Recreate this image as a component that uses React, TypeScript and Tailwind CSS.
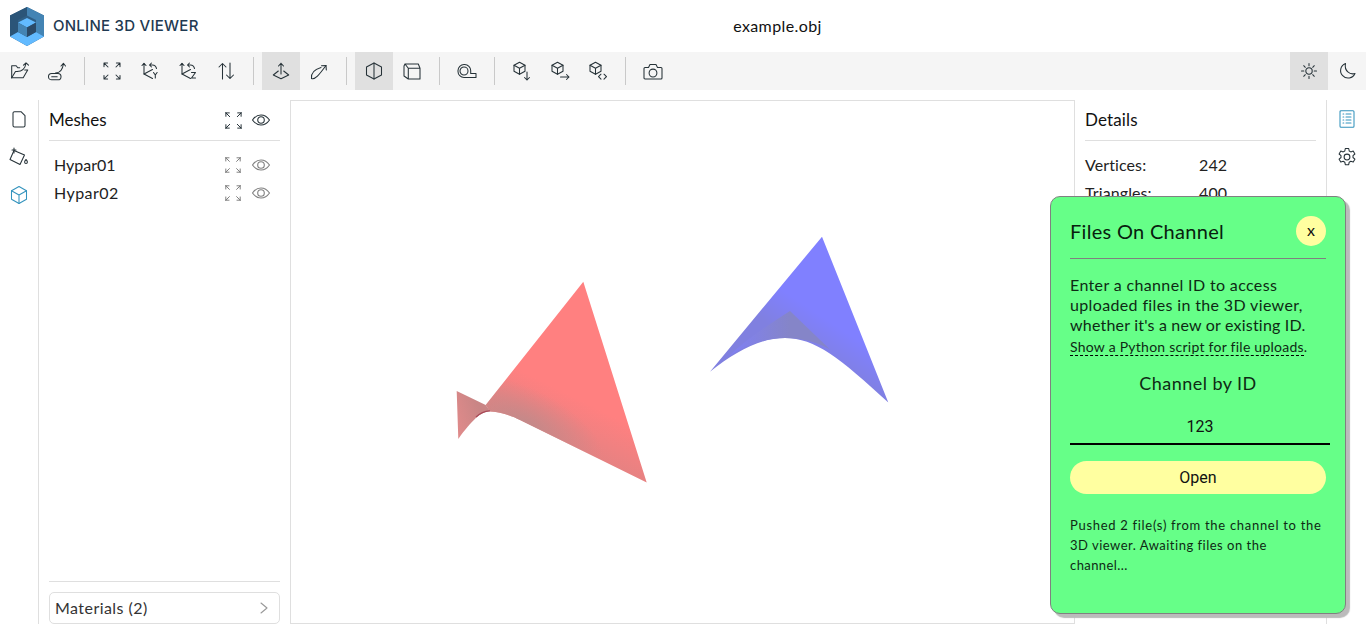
import React from "react";

const S = ({ size = 20, color = "#263238", w = 1.05, children }: { size?: number; color?: string; w?: number; children: React.ReactNode }) => (
  <svg width={size} height={size} viewBox="0 0 20 20" fill="none" stroke={color} strokeWidth={w} strokeLinecap="round" strokeLinejoin="round">
    {children}
  </svg>
);

const FitPaths = () => (
  <>
    <path d="M2 2h3.600M2 2v3.600M2 2l4 4" />
    <path d="M18 2h-3.600M18 2v3.600M18 2l-4 4" />
    <path d="M2 18h3.600M2 18v-3.600M2 18l4-4" />
    <path d="M18 18h-3.600M18 18v-3.600M18 18l-4-4" />
  </>
);

const EyePaths = () => (
  <>
    <path d="M1.500 10C4 6.400 7 5 10 5s6 1.400 8.500 5c-2.500 3.600-5.500 5-8.500 5s-6-1.400-8.500-5z" />
    <circle cx="10" cy="10" r="3.300" />
  </>
);

const icons: Record<string, React.ReactNode> = {
  open: (
    <>
      <path d="M2.700 16.700V4.700h4.500l1.500 2h2" />
      <path d="M2.700 16.700L6.500 10.500h2" />
      <path d="M2.700 16.700h11.500l4.500-7.700h-3" />
      <path d="M8 10.500c4 0 8-1.500 9-8.500M14.500 4.200L17 1.800l2.500 2.400" />
    </>
  ),
  link: (
    <>
      <rect x="1.500" y="12.500" width="12.500" height="6.300" rx="3.100" />
      <path d="M4.700 15.700h5.500" />
      <path d="M8.500 12c4 0 7-2 8-9.500M14 5l2.400-2.700L18.500 5" />
    </>
  ),
  fit: <FitPaths />,
  rotY: (
    <>
      <path d="M4 2.500V13l8.500 4.500" />
      <path d="M2 4.500l2-2.200 2 2.200" />
      <path d="M4 13l8.500-4.500" />
      <path d="M9.500 4h3c2 0 3.500 1.500 4 3.500M11.500 2l-2 2 2 2" />
      <path d="M13.500 11.500l1.800 2.500 1.800-2.500M15.300 14v3" />
    </>
  ),
  rotZ: (
    <>
      <path d="M4 2.500V13l8.500 4.500" />
      <path d="M2 4.500l2-2.200 2 2.200" />
      <path d="M4 13l8.500-4.500" />
      <path d="M9.500 4h3c2 0 3.500 1.500 4 3.500M11.500 2l-2 2 2 2" />
      <path d="M13.500 11.500h4l-4 5.500h4" />
    </>
  ),
  flip: (
    <>
      <path d="M6.500 18V2.500M3 6l3.500-3.500L10 6" />
      <path d="M14 2v15.500M10.500 14l3.500 3.500 3.500-3.500" />
    </>
  ),
  axis: (
    <>
      <path d="M10 13V2.300M7.500 5L10 2.300 12.500 5" />
      <path d="M7.300 10L2.300 14l7.700 3.700 7.700-3.700-5-4" />
    </>
  ),
  curve: (
    <>
      <path d="M2.500 17.500C2 13 5 8.500 12 6.500M2.500 17.500C6 19 10 14 17 4.500" />
      <path d="M12.500 4.700L17 4.500l.3 4.500" />
    </>
  ),
  persp: (
    <>
      <path d="M10 2l7.500 4v8L10 18l-7.500-4V6z" />
      <path d="M10 2v16" />
    </>
  ),
  ortho: <path d="M6.300 7.300H18V18H6.300zM6.300 7.300L3 3H16.300L18 7.300M3 3L2 5v10l4.300 3" />,
  measure: (
    <>
      <path d="M7 16.500h12v-4h-5.300V9.500A6 6 0 0 0 7.700 3.500H7A6 6 0 0 0 1 9.500v1A6 6 0 0 0 7 16.500z" />
      <circle cx="7" cy="10" r="4" />
    </>
  ),
  snapshot: (
    <>
      <path d="M2 6.500h3.500L7 3.500h6l1.500 3H18a1 1 0 0 1 1 1V17a1 1 0 0 1-1 1H2a1 1 0 0 1-1-1V7.500a1 1 0 0 1 1-1z" />
      <circle cx="10" cy="12" r="3.900" />
    </>
  ),
  sun: (
    <>
      <circle cx="10" cy="10" r="3.200" />
      <path d="M10 2.500v2.300M10 15.200v2.300M2.500 10h2.300M15.200 10h2.300M4.700 4.700l1.600 1.600M13.700 13.700l1.600 1.600M4.700 15.300l1.600-1.600M13.700 6.300l1.600-1.600" />
    </>
  ),
  moon: <path d="M8.500 2.500a7.500 7.500 0 1 0 9.500 10c-5 1.500-11-2.500-9.500-10z" />,
  file: <path d="M4 4.200A1.500 1.500 0 0 1 5.500 2.700H12L16 6.700V16.500A1.500 1.500 0 0 1 14.500 18H5.500A1.500 1.500 0 0 1 4 16.500z" />,
  material: (
    <>
      <path d="M5 3.500L15.500 8 11 17.500 1 12.500z" />
      <path d="M5 1v5M3 3h4" />
      <path d="M17 12.500c.8 1 1.400 1.700 1.400 2.500a1.400 1.400 0 0 1-2.800 0c0-.8.600-1.500 1.400-2.500z" />
    </>
  ),
  cube: (
    <>
      <path d="M10 1.500l7.500 4.300v8.400L10 18.500l-7.500-4.300V5.800z" />
      <path d="M2.500 5.800L10 10l7.500-4.200M10 10v8.500" />
    </>
  ),
  details: (
    <>
      <rect x="3" y="1.700" width="14" height="16.500" rx="1" />
      <path d="M6 5h.8M9 5h5M6 8h.8M9 8h5M6 11h.8M9 11h5M6 14h.8M9 14h5" />
    </>
  ),
  settings: (
    <>
      <path d="M8.300 1.500h3.400l.5 2.500 1.600.9 2.400-.8 1.700 2.900-1.900 1.700v1.800l1.900 1.700-1.700 2.900-2.400-.8-1.600.9-.5 2.500H8.300l-.5-2.500-1.600-.9-2.400.8-1.700-2.900 1.900-1.700V8.700L2.100 7l1.700-2.900 2.400.8 1.600-.9z" />
      <circle cx="10" cy="10" r="2.900" />
    </>
  ),
};

const CubeMini = () => (
  <>
    <path d="M7.500 1.300l5.500 3v6l-5.500 3-5.500-3v-6z" />
    <path d="M2 4.300l5.500 3 5.500-3M7.500 7.300v6" />
  </>
);
const exportIcons: Record<string, React.ReactNode> = {
  down: <path d="M15 11v8M12.500 16.500L15 19l2.500-2.500" />,
  right: <path d="M10.500 16h8.500M16.500 13.500L19 16l-2.500 2.500" />,
  code: <path d="M13 13.200l-2.500 2.500 2.500 2.500M16 13.200l2.500 2.500-2.500 2.500" />,
};

const Btn = ({ name, active, ex }: { name?: string; active?: boolean; ex?: string }) => (
  <div className={`w-[38px] h-[38px] flex items-center justify-center shrink-0 ${active ? "bg-[#e0e0e0]" : ""}`}>
    <S>{ex ? <><CubeMini />{exportIcons[ex]}</> : icons[name as string]}</S>
  </div>
);

const Sep = () => (
  <div className="w-[17px] h-[38px] flex items-center justify-center shrink-0">
    <div className="w-px h-[28px] bg-[#c9c9c9]" />
  </div>
);

const Logo = () => (
  <svg width="34" height="39" viewBox="0 0 34 39" className="shrink-0">
    <path d="M17 0L34 8.500V29.500L17 39 0 29.500V8.500z" fill="#2f5f86" />
    <path d="M17 0L34 8.500V29.500L26 25V13L17 8.500z" fill="#4484b4" />
    <path d="M0 8.500L17 0v8.500L8 13v12L0 29.500z" fill="#2b5578" />
    <path d="M0 29.500L8 25l9 5 9-5 8 4.500L17 39z" fill="#62baff" />
    <path d="M17 11L26 15.500 17 20.500 8 15.500z" fill="#62baff" />
    <path d="M8 15.500L17 20.500V30L8 25z" fill="#4484b4" />
    <path d="M26 15.500L17 20.500V30L26 25z" fill="#2b4a68" />
  </svg>
);

const Mesh = () => (
  <svg viewBox="291 101 783 522" className="block w-full h-full">
    <defs>
      <linearGradient id="redG" gradientUnits="userSpaceOnUse" x1="565" y1="455" x2="590" y2="405">
        <stop offset="0" stopColor="#e08282" />
        <stop offset="1" stopColor="#ff8080" />
      </linearGradient>
      <radialGradient id="redR" gradientUnits="userSpaceOnUse" cx="525" cy="424" r="85" gradientTransform="translate(525 424) rotate(26) scale(1 0.42) translate(-525 -424)">
        <stop offset="0" stopColor="#c08a8a" stopOpacity="0.95" />
        <stop offset="1" stopColor="#c08a8a" stopOpacity="0" />
      </radialGradient>
      <linearGradient id="redW" gradientUnits="userSpaceOnUse" x1="480" y1="412" x2="456" y2="420">
        <stop offset="0" stopColor="#c98585" />
        <stop offset="1" stopColor="#de8a8a" />
      </linearGradient>
      <linearGradient id="blueD" gradientUnits="userSpaceOnUse" x1="790" y1="335" x2="735" y2="335">
        <stop offset="0" stopColor="#8585c8" />
        <stop offset="1" stopColor="#8080f0" />
      </linearGradient>
      <linearGradient id="blueE" gradientUnits="userSpaceOnUse" x1="860" y1="385" x2="880" y2="355">
        <stop offset="0" stopColor="#8080e0" />
        <stop offset="1" stopColor="#8080ff" />
      </linearGradient>
    </defs>
    <path d="M583.300 281.700L646.700 482.500 520 420C512 416 503 412.500 490 411.500L485.700 405z" fill="url(#redG)" />
    <path d="M583.300 281.700L646.700 482.500 520 420C512 416 503 412.500 490 411.500L485.700 405z" fill="url(#redR)" />
    <path d="M456.700 391L485.700 405 490 411C481 411.500 472 420 458.300 439z" fill="url(#redW)" />
    <path d="M490 410.800C484 411 480 413 476 417" stroke="#a84a58" strokeWidth="1.200" fill="none" />
    <path d="M822 236.700L888.300 402.500C840 358 815 338 785 338 760 338 735 352 710 371.700z" fill="url(#blueE)" />
    <path d="M790 311L830 349.500C815 341 800 338 785 338 765 338 745 345 728 357 745 340 765 327 790 311z" fill="url(#blueD)" />
  </svg>
);

const body = "font-['Lato','Noto_Sans',sans-serif]";

export default function App() {
  return (
    <div className={`h-screen w-full flex flex-col bg-white text-[#1a1a1a] overflow-hidden relative ${body}`}>
      <header className="h-[52px] flex items-center shrink-0">
        <div className="w-[189px] shrink-0 flex items-center pl-[10px] gap-[9px] overflow-visible whitespace-nowrap">
          <Logo />
          <span className="font-['Inter',sans-serif] font-medium text-[15px] text-[#1f3a52] tracking-[0.25px]">ONLINE 3D VIEWER</span>
        </div>
        <div className="flex-1 text-center text-[16px] tracking-[0.4px] text-[#111]">example.obj</div>
      </header>

      <div className="h-[38px] flex bg-[#f5f5f5] shrink-0">
        <Btn name="open" />
        <Btn name="link" />
        <Sep />
        <Btn name="fit" />
        <Btn name="rotY" />
        <Btn name="rotZ" />
        <Btn name="flip" />
        <Sep />
        <Btn name="axis" active />
        <Btn name="curve" />
        <Sep />
        <Btn name="persp" active />
        <Btn name="ortho" />
        <Sep />
        <Btn name="measure" />
        <Sep />
        <Btn ex="down" />
        <Btn ex="right" />
        <Btn ex="code" />
        <Sep />
        <Btn name="snapshot" />
        <div className="ml-auto flex">
          <Btn name="sun" active />
          <Btn name="moon" />
        </div>
      </div>

      <main className="flex-1 min-h-0 flex mt-[10px] mb-[10px]">
        <nav className="w-[39px] shrink-0 border-r border-[#dfdfdf] flex flex-col items-center">
          <div className="h-[38px] flex items-center justify-center"><S>{icons.file}</S></div>
          <div className="h-[38px] flex items-center justify-center"><S>{icons.material}</S></div>
          <div className="h-[38px] flex items-center justify-center"><S color="#3393bd">{icons.cube}</S></div>
        </nav>

        <aside className="w-[251px] shrink-0 px-[10px] flex flex-col">
          <div className="h-[41px] shrink-0 flex items-center border-b border-[#dfdfdf]">
            <span className="flex-1 text-[17px] tracking-[0px] text-[#111]">Meshes</span>
            <div className="w-[28px] flex justify-center"><S size={19}><FitPaths /></S></div>
            <div className="w-[28px] flex justify-center mr-[5px]"><S size={20}><EyePaths /></S></div>
          </div>
          <div className="flex-1 pt-[10px]">
            {[
              { n: "Hypar01", t: "tracking-[0px]" },
              { n: "Hypar02", t: "tracking-[0.45px]" },
            ].map(({ n, t }) => (
              <div key={n} className="h-[28px] flex items-center pl-[5px]">
                <span className={`flex-1 text-[16px] text-[#222] ${t}`}>{n}</span>
                <div className="w-[28px] flex justify-center"><S size={18} color="#808080" w={1.1}><FitPaths /></S></div>
                <div className="w-[28px] flex justify-center mr-[5px]"><S size={20} color="#808080" w={1.1}><EyePaths /></S></div>
              </div>
            ))}
          </div>
          <div className="border-t border-[#dfdfdf] pt-[10px] shrink-0">
            <div className="h-[32px] border border-[#dfdfdf] rounded-[5px] flex items-center pl-[5px] pr-[9px]">
              <span className="flex-1 text-[16px] tracking-[0.45px] text-[#333]">Materials (2)</span>
              <svg width="12" height="14" viewBox="0 0 12 14" fill="none" stroke="#999" strokeWidth="1.100" strokeLinecap="round" strokeLinejoin="round"><path d="M3 2l6 5-6 5" /></svg>
            </div>
          </div>
        </aside>

        <section className="w-[785px] shrink-0 border border-[#dfdfdf]">
          <Mesh />
        </section>

        <aside className="w-[251px] shrink-0 px-[10px] flex flex-col">
          <div className="h-[41px] shrink-0 flex items-center border-b border-[#dfdfdf]">
            <span className="text-[17px] tracking-[0.15px] text-[#111]">Details</span>
          </div>
          <div className="pt-[10px]">
            <div className="h-[28px] flex items-center text-[16px] tracking-[0.1px] text-[#222]">
              <span className="w-[114px]">Vertices:</span><span>242</span>
            </div>
            <div className="h-[28px] flex items-center text-[16px] tracking-[0.1px] text-[#222]">
              <span className="w-[114px]">Triangles:</span><span>400</span>
            </div>
          </div>
        </aside>

        <nav className="flex-1 border-l border-[#dfdfdf] flex flex-col items-center">
          <div className="h-[38px] flex items-center justify-center"><S color="#3393bd">{icons.details}</S></div>
          <div className="h-[38px] flex items-center justify-center"><S>{icons.settings}</S></div>
        </nav>
      </main>

      <div className="absolute left-[1050px] top-[196px] w-[296px] h-[418px] bg-[#66ff88] border border-[#808080] rounded-[10px] shadow-[4px_4px_1px_#bbbbbb] px-[19px] text-[#0e2a14]">
        <div className="h-[62px] pt-[7px] flex items-center justify-between border-b border-[#808080] w-[256px]">
          <span className="text-[20px] tracking-[0.3px] text-[#08200e]">Files On Channel</span>
          <span className="w-[30px] h-[30px] rounded-full bg-[#ffffa0] flex items-center justify-center text-[16px] text-[#111] pb-[2px]">x</span>
        </div>
        <p className="mt-[16px] text-[16px] leading-[20px] tracking-[0.36px] whitespace-nowrap">
          Enter a channel ID to access<br />uploaded files in the 3D viewer,<br /><span className="tracking-[0.2px]">whether it's a new or existing ID.</span>
        </p>
        <p className="mt-[2px] text-[14px] leading-[20px] tracking-[0.25px] whitespace-nowrap">
          <span className="border-b border-dashed border-black">Show a Python script for file uploads</span>.
        </p>
        <div className="mt-[14px] text-center w-[256px] text-[18px] leading-[24px] tracking-[0.45px]">Channel by ID</div>
        <div className="mt-[21px] w-[260px] h-[29px] border-b-2 border-black text-center text-[16px] font-['Roboto',sans-serif] text-[#111] leading-[21px]">123</div>
        <div className="mt-[16px] w-[256px] h-[33px] rounded-full bg-[#ffffa0] flex items-center justify-center text-[16px] font-['Roboto',sans-serif] text-[#111]">Open</div>
        <p className="mt-[21px] text-[13px] leading-[20px] whitespace-nowrap">
          <span className="tracking-[0.7px]">Pushed 2 file(s) from the channel to the</span><br />
          <span className="tracking-[0.5px]">3D viewer. Awaiting files on the</span><br />
          <span className="tracking-[0.42px]">channel...</span>
        </p>
      </div>
    </div>
  );
}
